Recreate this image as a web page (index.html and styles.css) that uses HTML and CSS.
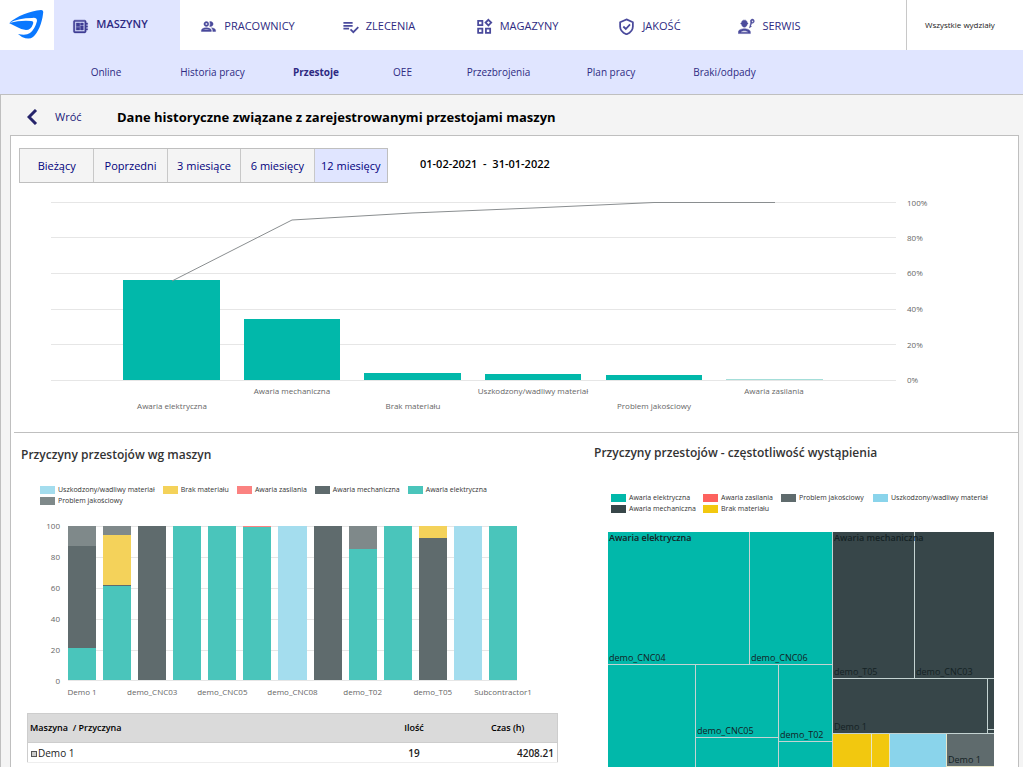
FILE: index.html
```html
<!DOCTYPE html>
<html lang="pl">
<head>
<meta charset="utf-8">
<meta name="viewport" content="width=device-width, initial-scale=1">
<title>Przestoje</title>
<link rel="stylesheet" href="styles.css">
</head>
<body>
<header class="topbar">
  <a class="logo" href="#" aria-label="Start">
    <svg width="36" height="30" viewBox="0 0 36 30" fill="#0a78ff">
      <path d="M0 13C8 6 21 1 32 0Q35 0 34 4C33 13 29 23 24 27Q20 30 13 27L9 24Q17 26 21 23Q26 19 28 11Q28 7 23 8Q10 8 0 13Z"/>
      <path d="M0 13Q12 10 22 11Q25 11 24 14Q22 20 17 20Q13 20 8 17Z"/>
    </svg>
  </a>
  <nav class="modules">
    <a class="module m-machines active" href="#">
      <svg viewBox="0 0 24 24" fill="currentColor" stroke="currentColor" stroke-width="0.6"><path d="M22 9V7h-2V5c0-1.100-.9-2-2-2H4c-1.100 0-2 .9-2 2v14c0 1.100.9 2 2 2h14c1.100 0 2-.9 2-2v-2h2v-2h-2v-2h2v-2h-2V9h2zm-4 10H4V5h14v14zM6 13h5v4H6zm6-6h4v3h-4zM6 7h5v5H6zm6 4h4v6h-4z"/></svg>
      <span>MASZYNY</span>
    </a>
    <a class="module m-staff" href="#">
      <svg viewBox="0 0 24 24" fill="currentColor" stroke="currentColor" stroke-width="0.6"><path d="M9 13.750c-2.340 0-7 1.170-7 3.500V19h14v-1.750c0-2.330-4.660-3.500-7-3.500zM4.340 17c.84-.58 2.870-1.250 4.660-1.250s3.820.67 4.660 1.250H4.340zM9 12c1.930 0 3.500-1.570 3.500-3.500S10.930 5 9 5 5.500 6.570 5.500 8.500 7.070 12 9 12zm0-5c.83 0 1.500.67 1.500 1.500S9.830 10 9 10s-1.500-.67-1.500-1.500S8.170 7 9 7zm7.040 6.810c1.160.84 1.960 1.960 1.960 3.440V19h4v-1.750c0-2.020-3.500-3.170-5.960-3.440zM15 12c1.930 0 3.500-1.570 3.500-3.500S16.930 5 15 5c-.54 0-1.040.13-1.500.35.63.89 1 1.980 1 3.150s-.37 2.260-1 3.150c.46.22.96.35 1.500.35z"/></svg>
      <span>PRACOWNICY</span>
    </a>
    <a class="module m-orders" href="#">
      <svg viewBox="0 0 24 24" fill="none" stroke="currentColor" stroke-width="2.500"><path d="M2 7h13M2 11h13M2 15h8M12 16l4 4 7-7"/></svg>
      <span>ZLECENIA</span>
    </a>
    <a class="module m-stock" href="#">
      <svg viewBox="0 0 24 24" fill="none" stroke="currentColor" stroke-width="2.500"><path d="M3 4h6v6H3zM3 15h6v6H3zM14 15h6v6h-6zM17.500 2.500l4 4-4 4-4-4z"/></svg>
      <span>MAGAZYNY</span>
    </a>
    <a class="module m-quality" href="#">
      <svg viewBox="0 0 24 24" fill="none" stroke="currentColor" stroke-width="2.500"><path d="M12 2l9 4v6c0 5-4 9-9 11-5-2-9-6-9-11V6zM7.500 12l3.500 3.500L17 9"/></svg>
      <span>JAKOŚĆ</span>
    </a>
    <a class="module m-service" href="#">
      <svg viewBox="0 0 24 24" fill="currentColor" stroke="currentColor" stroke-width="0.6"><path fill-rule="evenodd" d="M9 15c-3 0-8.500 1.500-8.500 4.500V22h17v-2.500C17.500 16.500 12 15 9 15zM4 20c0-1.200 3-2 5-2s5 .8 5 2z"/><path d="M4 7h1c0-2 1-3.500 2.500-4h3C12 3.500 13 5 13 7h1v1.500h-1C13 11 11 13 9 13s-4-2-4-4.500H4z"/><path fill-rule="evenodd" d="M20.500 1.500a3 3 0 1 1-1 6L18 11l1 1-3 2 1.500-5.500L17.800 6a3 3 0 0 1 2.700-4.500zm0 2a1.200 1.200 0 1 0 .1 0z"/></svg>
      <span>SERWIS</span>
    </a>
  </nav>
  <a class="department" href="#">Wszystkie wydziały</a>
</header>

<nav class="subnav">
  <a class="s-online" href="#">Online</a>
  <a class="s-history" href="#">Historia pracy</a>
  <a class="s-stops current" href="#">Przestoje</a>
  <a class="s-oee" href="#">OEE</a>
  <a class="s-changeover" href="#">Przezbrojenia</a>
  <a class="s-plan" href="#">Plan pracy</a>
  <a class="s-scrap" href="#">Braki/odpady</a>
</nav>

<main class="content">
  <div class="heading">
    <a class="back" href="#">
      <svg width="11" height="16" viewBox="0 0 11 16" fill="none" stroke="#26246b" stroke-width="3"><path d="M9 1L2 8l7 7"/></svg>
      <span>Wróć</span>
    </a>
    <h1>Dane historyczne związane z zarejestrowanymi przestojami maszyn</h1>
  </div>

  <div class="panel">
    <div class="filters">
      <div class="periods">
        <button type="button">Bieżący</button>
        <button type="button">Poprzedni</button>
        <button type="button">3 miesiące</button>
        <button type="button">6 miesięcy</button>
        <button type="button" class="selected">12 miesięcy</button>
      </div>
      <p class="range">01-02-2021&nbsp; -&nbsp; 31-01-2022</p>
    </div>

    <svg class="pareto" viewBox="0 0 1007 241" role="img" aria-label="Pareto przyczyn przestojów">
      <g class="gridlines">
        <path d="M40 11.500H885M40 46.500H885M40 82.500H885M40 118.500H885M40 153.500H885M40 189.500H885"/>
      </g>
      <g class="bars">
        <rect x="112" y="89" width="97" height="100"/>
        <rect x="233" y="128" width="96" height="61"/>
        <rect x="353" y="182" width="97" height="7"/>
        <rect x="474" y="183" width="96" height="6"/>
        <rect x="595" y="184" width="96" height="5"/>
        <rect class="faint" x="715" y="188" width="97" height="1"/>
      </g>
      <polyline class="cumulative" points="161,90 281,29 401,22 522,17 643,11.500 764,11.500"/>
      <g class="ticks">
        <text x="896" y="15">100%</text>
        <text x="896" y="50">80%</text>
        <text x="896" y="85">60%</text>
        <text x="896" y="121">40%</text>
        <text x="896" y="157">20%</text>
        <text x="896" y="192">0%</text>
      </g>
      <g class="names">
        <text x="161" y="218">Awaria elektryczna</text>
        <text x="281" y="203">Awaria mechaniczna</text>
        <text x="402" y="218">Brak materiału</text>
        <text x="522" y="203">Uszkodzony/wadliwy materiał</text>
        <text x="643" y="218">Problem jakościowy</text>
        <text x="763" y="203">Awaria zasilania</text>
      </g>
    </svg>

    <div class="details">
      <section class="by-machine">
        <h2>Przyczyny przestojów wg maszyn</h2>
        <ul class="legend legend-flow">
          <li><i class="t-blue"></i>Uszkodzony/wadliwy materiał</li>
          <li><i class="t-yellow"></i>Brak materiału</li>
          <li><i class="t-red"></i>Awaria zasilania</li>
          <li><i class="t-dark"></i>Awaria mechaniczna</li>
          <li><i class="t-teal"></i>Awaria elektryczna</li>
          <li><i class="t-gray"></i>Problem jakościowy</li>
        </ul>
        <div class="stacked">
          <div class="y-axis"><span>100</span><span>80</span><span>60</span><span>40</span><span>20</span><span>0</span></div>
          <div class="plot">
            <div class="col"><i class="t-gray" style="flex-grow:13"></i><i class="t-dark" style="flex-grow:66"></i><i class="t-teal" style="flex-grow:21"></i></div>
            <div class="col"><i class="t-gray" style="flex-grow:6"></i><i class="t-yellow" style="flex-grow:32"></i><i class="t-dark" style="flex-grow:1"></i><i class="t-teal" style="flex-grow:61"></i></div>
            <div class="col"><i class="t-dark"></i></div>
            <div class="col"><i class="t-teal"></i></div>
            <div class="col"><i class="t-teal"></i></div>
            <div class="col"><i class="t-red" style="flex-grow:1"></i><i class="t-teal" style="flex-grow:150"></i></div>
            <div class="col"><i class="t-blue"></i></div>
            <div class="col"><i class="t-dark"></i></div>
            <div class="col"><i class="t-gray" style="flex-grow:15"></i><i class="t-teal" style="flex-grow:85"></i></div>
            <div class="col"><i class="t-teal"></i></div>
            <div class="col"><i class="t-yellow" style="flex-grow:8"></i><i class="t-dark" style="flex-grow:92"></i></div>
            <div class="col"><i class="t-blue"></i></div>
            <div class="col"><i class="t-teal"></i></div>
          </div>
          <div class="x-axis">
            <span>Demo 1</span><span></span><span>demo_CNC03</span><span></span><span>demo_CNC05</span><span></span><span>demo_CNC08</span><span></span><span>demo_T02</span><span></span><span>demo_T05</span><span></span><span>Subcontractor1</span>
          </div>
        </div>
        <table class="totals">
          <thead>
            <tr><th class="c-name">Maszyna &nbsp;/ Przyczyna</th><th class="c-count">Ilość</th><th class="c-hours">Czas (h)</th></tr>
          </thead>
          <tbody>
            <tr><td class="c-name"><button type="button" class="expand" aria-label="Rozwiń"></button>Demo 1</td><td class="c-count">19</td><td class="c-hours">4208.21</td></tr>
          </tbody>
        </table>
      </section>

      <section class="by-frequency">
        <h2>Przyczyny przestojów - częstotliwość wystąpienia</h2>
        <ul class="legend legend-grid">
          <li><i class="teal"></i>Awaria elektryczna</li>
          <li><i class="red"></i>Awaria zasilania</li>
          <li><i class="gray"></i>Problem jakościowy</li>
          <li><i class="blue"></i>Uszkodzony/wadliwy materiał</li>
          <li><i class="dark"></i>Awaria mechaniczna</li>
          <li><i class="yellow"></i>Brak materiału</li>
        </ul>
        <div class="treemap">
          <div class="group electric">
            <b class="group-name">Awaria elektryczna</b>
            <div class="upper">
              <div class="tile teal">demo_CNC04</div>
              <div class="tile teal">demo_CNC06</div>
            </div>
            <div class="lower">
              <div class="tile teal"></div>
              <div class="split split-a"><div class="tile teal">demo_CNC05</div><div class="tile teal"></div></div>
              <div class="split split-b"><div class="tile teal">demo_T02</div><div class="tile teal"></div></div>
            </div>
          </div>
          <div class="group others">
            <b class="group-name">Awaria mechaniczna</b>
            <div class="mech-top">
              <div class="tile dark">demo_T05</div>
              <div class="tile dark">demo_CNC03</div>
            </div>
            <div class="mech-bottom">
              <div class="tile dark">Demo 1</div>
              <div class="split split-c"><div class="tile dark"></div><div class="tile dark"></div></div>
            </div>
            <div class="rest">
              <div class="tile yellow"></div>
              <div class="tile yellow"></div>
              <div class="tile blue"></div>
              <div class="split split-d"><div class="tile gray">Demo 1</div><div class="tile gray"></div></div>
            </div>
          </div>
        </div>
      </section>
    </div>
  </div>
</main>
</body>
</html>
```

FILE: styles.css
```css
* { box-sizing: border-box; }

body {
  margin: 0;
  height: 100vh;
  overflow: hidden;
  display: flex;
  flex-direction: column;
  background: #fff;
  color: #000;
  font: 11px/16px "Open Sans", "Noto Sans", sans-serif;
}

a { color: inherit; text-decoration: none; }
h1, h2, p, ul { margin: 0; padding: 0; }
ul { list-style: none; }

/* Top bar */
.topbar { display: flex; height: 50px; flex: none; color: #2e2a82; }
.logo { width: 54px; flex: none; padding: 10px 0 0 9px; }
.modules { display: flex; flex: 1; }
.module {
  display: flex;
  align-items: center;
  justify-content: center;
  gap: 7px;
  padding-top: 2px;
}
.module svg { width: 17px; height: 17px; color: #4a4a9c; flex: none; }
.module.active { background: #e0e5ff; font-weight: 600; color: #2e2a82; padding-right: 14px; }
.module.active span { padding-bottom: 4px; }
.module.active svg { color: #3f3d94; }
.m-machines { width: 126px; }
.m-staff { width: 135px; }
.m-orders { width: 127px; }
.m-stock { width: 150px; }
.m-quality { width: 115px; }
.m-service { width: 125px; }
.department {
  width: 117px;
  flex: none;
  border-left: 1px solid #c8c8c8;
  padding-left: 18px;
  line-height: 49px;
  font-size: 8px;
  color: #222;
}

/* Second level */
.subnav {
  display: flex;
  flex: none;
  height: 45px;
  padding-left: 54px;
  background: #e0e5ff;
  border-bottom: 1px solid #bfbfbf;
  line-height: 44px;
  text-align: center;
  font-size: 10px;
  color: #2e2a82;
}
.subnav .current { font-weight: 700; }
.s-online { width: 104px; }
.s-history { width: 109px; }
.s-stops { width: 98px; }
.s-oee { width: 75px; }
.s-changeover { width: 117px; }
.s-plan { width: 108px; }
.s-scrap { width: 119px; }

/* Content */
.content {
  flex: 1 0 auto;
  padding: 0 4px 0 9px;
  background: #f4f4f4;
  border-left: 1px solid #bfbfbf;
}
.heading { display: flex; align-items: center; height: 40px; padding: 4px 0 0 17px; }
.back { display: flex; align-items: center; gap: 17px; width: 90px; color: #1a1a7a; }
.heading h1 { font-size: 13px; line-height: 18px; font-weight: 700; }
.panel { background: #fff; border: 1px solid #bfbfbf; }

.filters { display: flex; align-items: flex-start; gap: 32px; padding: 12px 8px 0; height: 55px; }
.periods {
  display: grid;
  grid-template-columns: repeat(5, 1fr);
  width: 369px;
  height: 35px;
  border: 1px solid #bfbfbf;
}
.periods button {
  border: 0;
  border-left: 1px solid #c8c8c8;
  padding: 0;
  background: #f4f4f4;
  color: #00007c;
  font: inherit;
}
.periods button:first-child { border-left: 0; }
.periods .selected { background: #e0e5ff; }
.range { font-size: 11px; font-weight: 600; padding-top: 8px; }

/* Pareto */
.pareto { display: block; width: 100%; }
.gridlines path { stroke: #e6e6e6; fill: none; }
.bars rect { fill: #01b8aa; }
.bars .faint { fill: #a4ded9; }
.cumulative { fill: none; stroke: #8a8e90; stroke-width: 1; }
.pareto text { font-size: 8px; fill: #666; }
.names text { text-anchor: middle; }

/* Lower half */
.details {
  display: grid;
  grid-template-columns: 570fr 434fr;
  margin-left: 3px;
  border-top: 1px solid #bfbfbf;
}
.details h2 { font-size: 12px; line-height: 16px; font-weight: 600; color: #333; }
.by-machine { padding: 14px 26px 0 7px; }
.by-frequency { padding: 12px 24px 0 10px; }

.legend { font-size: 7px; line-height: 11px; color: #333; }
.legend li { display: flex; align-items: center; gap: 3px; white-space: nowrap; }
.legend i { width: 15px; height: 8px; flex: none; }
.legend-flow { display: flex; flex-wrap: wrap; column-gap: 8px; margin: 21px 0 0 19px; }
.legend-grid { display: grid; grid-template-columns: 92fr 78fr 92fr 121fr; margin: 31px 0 0 17px; }

.teal { background: #01b8aa; }
.dark { background: #374649; }
.red { background: #fd625e; }
.yellow { background: #f2c80f; }
.gray { background: #5f6b6d; }
.blue { background: #8ad4eb; }
.t-teal { background: #4ac5bb; }
.t-dark { background: #5f6b6d; }
.t-red { background: #fb8281; }
.t-yellow { background: #f4d25a; }
.t-gray { background: #7f898a; }
.t-blue { background: #a4ddee; }

/* Stacked columns */
.stacked {
  display: grid;
  grid-template-columns: 39px 1fr;
  column-gap: 8px;
  margin: 15px 41px 0 0;
  font-size: 8px;
  line-height: 10px;
  color: #666;
}
.y-axis { display: flex; flex-direction: column; justify-content: space-between; margin: 0 0 -5px; text-align: right; }
.plot {
  display: flex;
  gap: 7px;
  height: 155px;
  margin-top: 5px;
  background: repeating-linear-gradient(#e6e6e6 0 1px, transparent 1px 31px);
  border-bottom: 1px solid #e6e6e6;
}
.col { flex: 1; display: flex; flex-direction: column; }
.col i { flex: 1 1 0; }
.x-axis { grid-column: 2; display: grid; grid-template-columns: repeat(13, 1fr); column-gap: 7px; padding-top: 6px; }
.x-axis span { display: flex; justify-content: center; min-width: 0; white-space: nowrap; }

/* Table */
.totals { width: 531px; max-width: 100%; margin: 16px 0 0 6px; border-collapse: collapse; table-layout: fixed; }
.totals th, .totals td { padding: 0 3px 0 2px; text-align: center; }
.totals th { height: 29px; background: #dadada; font-size: 9px; font-weight: 600; border: solid #cdcdcd; border-width: 1px 0; }
.totals td { height: 20px; color: #222; font-size: 10px; border-bottom: 1px solid #eee; }
.totals td.c-count, .totals td.c-hours { font-weight: 600; }
.totals .c-name { width: auto; text-align: left; border-left: 1px solid #cdcdcd; }
.totals .c-count { width: 90px; }
.totals .c-hours { width: 98px; border-right: 1px solid #cdcdcd; }
.totals td.c-hours { text-align: right; }
.expand { width: 6px; height: 6px; margin: 0 1px; padding: 0; border: 1px solid #555; background: #ccc; vertical-align: 1px; }

/* Treemap */
.treemap {
  display: grid;
  grid-template-columns: 224fr 161fr;
  gap: 1px;
  height: 250px;
  margin: 18px 0 0 14px;
  background: #c4d3d2;
  font-size: 9px;
  line-height: 12px;
  color: #142224;
}
.group { position: relative; display: grid; gap: 1px; min-width: 0; }
.group > div, .split { display: grid; gap: 1px; min-width: 0; min-height: 0; }
.group-name { position: absolute; left: 1px; top: 0; font-weight: 600; white-space: nowrap; }
.tile { display: flex; align-items: flex-end; min-width: 0; min-height: 0; padding: 0 1px; }
.electric { grid-template-rows: 132px 1fr; }
.electric .upper { grid-template-columns: 141fr 82fr; }
.electric .lower { grid-template-columns: 87fr 82fr 53fr; }
.split-a { grid-template-rows: 72px 1fr; }
.split-b { grid-template-rows: 76px 1fr; }
.others { grid-template-rows: 146px 54px 1fr; }
.others .mech-top { grid-template-columns: 81fr 79fr; }
.others .mech-bottom { grid-template-columns: 154fr 6fr; }
.split-c { grid-template-rows: 50px 1fr; }
.others .rest { grid-template-columns: 38fr 17fr 56fr 47fr; background: #e8e6c8; }
.split-d { grid-template-rows: 32px 1fr; }
```
